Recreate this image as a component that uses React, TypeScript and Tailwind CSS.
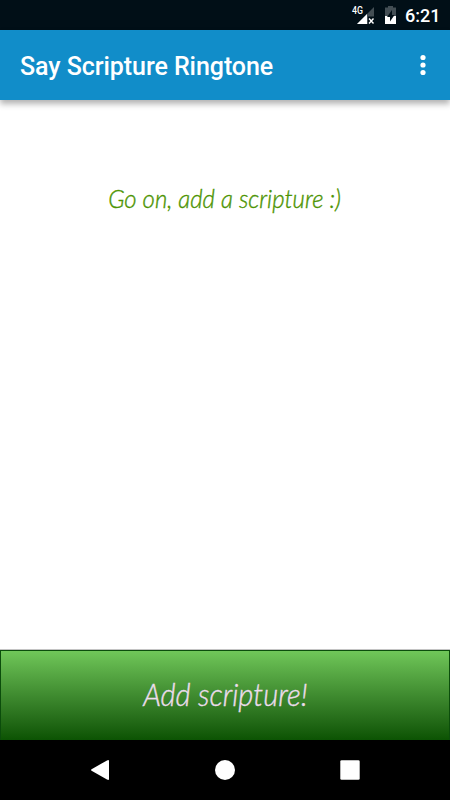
function StatusBar() {
  return (
    <div className="flex h-[30px] shrink-0 items-center bg-[#010f17] text-white">
      <svg className="ml-[350px] h-[30px] w-[50px] shrink-0" viewBox="0 0 50 30">
        <path d="M24 7 V16.5 H18 V24 H7 Z" fill="#434e54" />
        <path d="M17 14 V24 H7 Z" fill="#fff" />
        <path d="M19 18.5 L23.5 23.5 M23.5 18.5 L19 23.5" stroke="#fff" strokeWidth="1.4" />
        <text x="2" y="14" fill="#fff" fontFamily="Roboto" fontSize="10.5" fontWeight="500" textLength="11" lengthAdjust="spacingAndGlyphs">4G</text>
        <path d="M38 6 H43 V7.5 H46 V16 H35 V7.5 H38 Z" fill="#434e54" />
        <path d="M35 16 H46 V24 H35 Z" fill="#fff" />
        <path d="M42 10 L37 17 H40 V21.5 L44.5 15 H42 Z" fill="#010f17" />
      </svg>
      <span className="ml-[5px] pt-px text-[18px] leading-[30px] font-medium">6:21</span>
    </div>
  )
}

function Toolbar() {
  return (
    <header className="relative flex h-[70px] shrink-0 items-center justify-between bg-[#118dc9] pr-[24.5px] pl-5 text-white shadow-[0_4px_6px_rgba(0,0,0,0.3)]">
      <h1 className="pt-[3px] text-[25px] leading-[30px] font-medium tracking-[-0.06px] whitespace-nowrap">Say Scripture Ringtone</h1>
      <svg className="h-[22px] w-[6px]" viewBox="0 0 6 22" fill="#fff">
        <circle cx="3" cy="3.5" r="2.6" />
        <circle cx="3" cy="11" r="2.6" />
        <circle cx="3" cy="18.5" r="2.6" />
      </svg>
    </header>
  )
}

function NavigationBar() {
  return (
    <nav className="flex h-[60px] shrink-0 bg-black">
      <svg className="h-[60px] w-[450px]" viewBox="0 0 450 60" fill="#fff">
        <path d="M92 29 L107 20.4 Q109 19.5 109 21 V39 Q109 40.5 107 39.6 L92 31 Q90 30 92 29 Z" />
        <circle cx="225" cy="30" r="10" />
        <rect x="340.3" y="20.3" width="19.4" height="19.4" rx="1.3" />
      </svg>
    </nav>
  )
}

export default function App() {
  return (
    <div className="flex h-[800px] w-[450px] flex-col overflow-hidden bg-white font-['Roboto',sans-serif]">
      <StatusBar />
      <Toolbar />
      <main className="flex flex-1 flex-col items-center pt-[82px]">
        <p className="scale-x-[0.92] font-['Lato',sans-serif] text-[26px] leading-[32px] font-light whitespace-nowrap text-[#4d9403] italic [-webkit-text-stroke:0.4px_#4d9403]">
          Go on, add a scripture :)
        </p>
      </main>
      <div className="h-px shrink-0 bg-[#c4c4c4]" />
      <button className="flex h-[90px] shrink-0 items-center justify-center border border-b-0 border-[#0b4d0b] bg-linear-to-b from-[#70c759] to-[#0b5303] pb-1">
        <span className="scale-x-[0.91] font-['Lato',sans-serif] text-[32px] leading-[40px] font-light whitespace-nowrap text-[#eeddee] italic [-webkit-text-stroke:0.4px_#eeddee]">
          Add scripture!
        </span>
      </button>
      <NavigationBar />
    </div>
  )
}
